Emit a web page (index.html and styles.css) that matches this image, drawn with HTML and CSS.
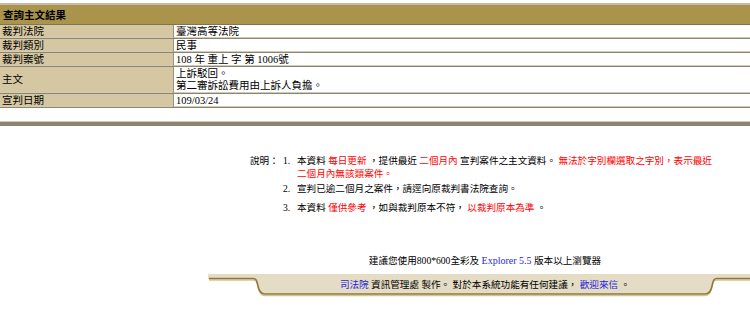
FILE: index.html
```html
<!DOCTYPE html>
<html lang="zh-Hant">
<head>
    <meta charset="UTF-8">
    <title>查詢主文結果</title>
    <link rel="stylesheet" href="styles.css">
</head>
<body>
<!--    查詢結果-->
<table class="result">
    <tr>
        <th colspan="2">查詢主文結果</th>
    </tr>
    <tr>
        <td class="label">裁判法院</td>
        <td>臺灣高等法院</td>
    </tr>
    <tr>
        <td class="label">裁判類別</td>
        <td>民事</td>
    </tr>
    <tr>
        <td class="label">裁判案號</td>
        <td>108 年 重上 字 第 1006號</td>
    </tr>
    <tr class="multi">
        <td class="label">主文</td>
        <td>上訴駁回。<br>第二審訴訟費用由上訴人負擔。</td>
    </tr>
    <tr>
        <td class="label">宣判日期</td>
        <td>109/03/24</td>
    </tr>
    <tr class="blank">
        <td colspan="2"></td>
    </tr>
</table>

<!--    說明-->
<div class="notes">
    <div class="notesTitle">說明：</div>
    <ol class="noteList">
        <li class="item1">
            <span class="num">1.</span>
            <span>本資料 <em>每日更新</em> ，提供最近 <em>二個月內</em> 宣判案件之主文資料。 <em>無法於字別欄選取之字別，表示最近<br>二個月內無該類案件。</em></span>
        </li>
        <li class="item2">
            <span class="num">2.</span>
            <span>宣判已逾二個月之案件，請逕向原裁判書法院查詢。</span>
        </li>
        <li class="item3">
            <span class="num">3.</span>
            <span>本資料 <em>僅供參考</em> ，如與裁判原本不符， <em>以裁判原本為準</em> 。</span>
        </li>
    </ol>
</div>

<!--    頁尾-->
<div class="foot">
    <p class="browser">建議您使用800*600全彩及 <a class="ie">Explorer 5.5</a> 版本以上瀏覽器</p>
    <div class="bar">
        <svg class="barShape" width="554" height="24" viewBox="0 0 554 24">
            <rect x="0" y="0" width="554" height="5" fill="#f1ece0"/>
            <path d="M0 0 H554 V5 H509 C505 5 505 8 504 12 C503 17 501 20 497 20 H57 C53 20 51 17 50 12 C49 8 49 5 45 5 H0 Z" fill="#e5dcc5"/>
            <path d="M1 6 H45 C49 6 49 9 50 13 C51 18 53 21.5 57 21.5 H497 C501 21.5 503 18 504 13 C505 9 505 6 509 6 H554" fill="none" stroke="#d2c49a" stroke-width="1.5"/>
            <path d="M1 4.5 H45 C49 4.5 49 8 50 12 C51 17 53 20 57 20 H497 C501 20 503 17 504 12 C505 8 505 4.5 509 4.5 H554" fill="none" stroke="#8f7838" stroke-width="1.5"/>
        </svg>
        <p class="barText"><a>司法院</a> 資訊管理處 製作。 對於本系統功能有任何建議， <a>歡迎來信</a> 。</p>
    </div>
</div>
</body>
</html>
```

FILE: styles.css
```css
body{
    margin: 0;
    padding-top: 3px;
    font-family: "Liberation Serif", "Noto Sans CJK TC", serif;
    color: #000;
    background: #fff;
}
/*查詢結果表格*/
.result{
    width: 100%;
    border-collapse: separate;
    border-spacing: 0;
    border-bottom: 3px solid #8c8670;
    font-size: 10.5px;
}
.result th{
    height: 19px;
    padding: 0 3px;
    text-align: left;
    font-size: 10.5px;
    font-weight: bold;
    background: #aa944c;
    border-top: 2px solid #c4bca6;
    border-bottom: 1px solid #7e7450;
}
.result td{
    height: 13px;
    padding: 0 2px;
    line-height: 12px;
    vertical-align: middle;
    border-bottom: 1px solid #8a8470;
    box-shadow: inset 0 -1px #d2cbb6;
}
.result td.label{
    width: 169px;
    background: #d5c7a2;
    border-right: 1px solid #9a927a;
}
.result .multi td{
    height: 26px;
    line-height: 12.5px;
}
.result .blank td{
    height: 14px;
}
/*說明*/
.notes{
    display: flex;
    margin: 28px 0 0 250px;
    font-size: 9.6px;
    line-height: 13px;
}
.notesTitle{
    width: 33px;
}
.noteList{
    margin: 0;
    padding: 0;
    list-style: none;
}
.noteList li{
    display: flex;
    white-space: nowrap;
}
.noteList .num{
    width: 14px;
}
.noteList em{
    font-style: normal;
    color: #f00;
}
.item2{
    margin-top: 2px;
}
.item3{
    margin-top: 6px;
}
/*頁尾*/
.foot{
    width: 554px;
    margin: 40px 0 0 208px;
    font-size: 9.6px;
    text-align: center;
}
.browser{
    margin: 0;
    line-height: 13px;
}
.ie{
    color: #1f1fe0;
    font-size: 10px;
}
.bar{
    display: grid;
    margin-top: 7px;
}
.barShape,.barText{
    grid-area: 1 / 1;
}
.barShape{
    display: block;
}
.barText{
    margin: 0;
    line-height: 22px;
}
.barText a{
    color: #1f1fe0;
}
```
